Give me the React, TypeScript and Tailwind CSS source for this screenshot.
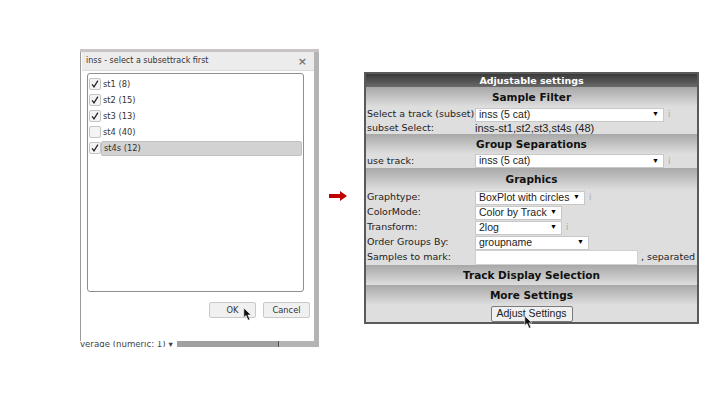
const sans = "font-['Liberation_Sans',sans-serif]";
const dejavu = "font-['DejaVu_Sans',sans-serif]";

const items = [
  { label: "st1 (8)", checked: true },
  { label: "st2 (15)", checked: true },
  { label: "st3 (13)", checked: true },
  { label: "st4 (40)", checked: false },
  { label: "st4s (12)", checked: true, active: true },
];

const Cursor = () => (
  <svg width="10" height="15" viewBox="0 0 13 18" className="absolute">
    <path d="M1 0.5 L1 13 L4 10.3 L6.6 16.5 L9 15.4 L6.4 9.6 L10.5 9.6 Z" fill="#111" stroke="#fff" strokeWidth="0.8" />
  </svg>
);

const Check = () => (
  <svg width="12" height="12" viewBox="0 0 12 12">
    <path d="M2.5 6.5 L4.8 9.5 L9.5 2" fill="none" stroke="#222" strokeWidth="1.5" />
  </svg>
);

const Dialog = () => (
  <div className={`w-[239px] h-[298px] bg-[#b4b4b4] flex flex-col overflow-hidden ${dejavu}`}>
    <div className="h-[3px] bg-[#c9c3c3] shrink-0" />
    <div className="flex h-[289px] shrink-0">
      <div className="w-[2px] bg-white border-l border-[#9a9a9a] shrink-0" />
      <div className="w-[232px] bg-white flex flex-col">
        <div className="h-[19px] bg-[#ececec] border-b border-[#dcdcdc] flex items-center justify-between pl-[4px] pr-[7px] text-[8px] text-[#333] shrink-0">
          <span>inss - select a subsettrack first</span>
          <span className="text-[11px] font-bold text-[#777] leading-none">×</span>
        </div>
        <div className="ml-[5px] mr-[10px] mt-[2px] h-[219px] border border-[#8f8f8f] rounded-[3px] pt-[2px] px-[1px] flex flex-col shrink-0">
          {items.map((it) => (
            <div key={it.label} className="h-[16px] flex items-center">
              <span className="w-[12px] h-[12px] shrink-0 border border-[#c4c4c4] rounded-[2px] bg-[#f4f4f4] flex items-center justify-center">
                {it.checked && <Check />}
              </span>
              <span className={`flex-1 h-[15px] flex items-center pl-[2px] text-[8.3px] text-[#333] rounded-[2px] ${it.active ? "bg-[#d2d2d2] border border-[#c0c0c0]" : ""}`}>
                {it.label}
              </span>
            </div>
          ))}
        </div>
        <div className="flex justify-end gap-[7px] pt-[10px] pr-[4px] text-[8.3px] text-[#333]">
          <button className="relative w-[47px] h-[16px] bg-[#f0f0f0] border border-[#c9c9c9] rounded-[2px] flex items-center justify-center">
            OK
            <span className="absolute left-[33px] top-[4px] w-[10px] h-[15px]"><Cursor /></span>
          </button>
          <button className="w-[47px] h-[16px] bg-[#f0f0f0] border border-[#c9c9c9] rounded-[2px] flex items-center justify-center">Cancel</button>
        </div>
      </div>
    </div>
    <div className="h-[6px] flex shrink-0">
      <div className="w-[97px] bg-white text-[8.6px] leading-[7px] text-[#444] whitespace-nowrap overflow-hidden">verage (numeric: 1) ▾</div>
      <div className="w-[102px] bg-[#a0a0a0] border-r border-[#555]" />
    </div>
  </div>
);

const SectionHead = ({ title, height = "h-[20px]" }: { title: string; height?: string }) => (
  <div className={`${height} pt-[1px] bg-gradient-to-b from-[#a8a8a8] to-[#dedede] flex items-center justify-center text-[10.5px] font-bold text-[#111] ${dejavu}`}>
    {title}
  </div>
);

const Select = ({ value, width }: { value: string; width: string }) => (
  <div className={`h-[14px] bg-white border border-[#c8c8c8] flex items-center justify-between pl-[3px] pr-[4px] text-[10.5px] text-[#222] ${width} ${sans}`}>
    <span className="whitespace-nowrap">{value}</span>
    <span className="text-[7px] text-black">▼</span>
  </div>
);

const Info = () => <span className="ml-[4px] text-[9px] text-[#aaa] leading-none">i</span>;

const Row = ({ label, children }: { label: string; children: React.ReactNode }) => (
  <div className="h-[15px] flex items-center">
    <span className="w-[109px] pl-[1px] shrink-0 whitespace-nowrap">{label}</span>
    {children}
  </div>
);

const Settings = () => (
  <div className={`w-[335px] h-[252px] border-2 border-[#5a5a5a] bg-[#dedede] text-[9.5px] text-[#222] ${dejavu}`}>
    <div className="h-[13px] pt-[1px] bg-gradient-to-b from-[#3a3a3a] to-[#6a6a6a] flex items-center justify-center text-[9.5px] font-bold text-white">
      Adjustable settings
    </div>
    <SectionHead title="Sample Filter" />
    <Row label="Select a track (subset)">
      <Select value="inss (5 cat)" width="w-[189px]" /><Info />
    </Row>
    <div className="h-[12px] flex items-center">
      <span className="w-[109px] pl-[1px]">subset Select:</span>
      <span className={`text-[11px] ${sans}`}>inss-st1,st2,st3,st4s (48)</span>
    </div>
    <SectionHead title="Group Separations" />
    <div className="h-[14px] flex items-center">
      <span className="w-[109px] pl-[1px] shrink-0">use track:</span>
      <Select value="inss (5 cat)" width="w-[189px]" /><Info />
    </div>
    <SectionHead title="Graphics" height="h-[22px]" />
    <Row label="Graphtype:">
      <Select value="BoxPlot with circles" width="w-[110px]" /><Info />
    </Row>
    <Row label="ColorMode:">
      <Select value="Color by Track" width="w-[87px]" />
    </Row>
    <Row label="Transform:">
      <Select value="2log" width="w-[87px]" /><Info />
    </Row>
    <Row label="Order Groups By:">
      <Select value="groupname" width="w-[114px]" />
    </Row>
    <Row label="Samples to mark:">
      <div className="w-[163px] h-[15px] bg-white border border-[#d0d0d0]" />
      <span className="ml-[3px] whitespace-nowrap">, separated</span>
    </Row>
    <SectionHead title="Track Display Selection" />
    <SectionHead title="More Settings" />
    <div className="flex justify-center pt-[1px]">
      <button className={`relative w-[82px] h-[16px] bg-[#f0f0f0] border border-[#7a7a7a] rounded-[2px] text-[10.5px] text-[#222] flex items-center justify-center ${sans}`}>
        Adjust Settings
        <span className="absolute left-[32px] top-[8px] w-[10px] h-[15px]"><Cursor /></span>
      </button>
    </div>
  </div>
);

export default function App() {
  return (
    <div className="w-[720px] h-[416px] bg-white flex items-start pl-[80px] pt-[49px] overflow-hidden">
      <Dialog />
      <svg width="18" height="10" viewBox="0 0 18 10" className="ml-[10px] mt-[142px] shrink-0">
        <path d="M0 3 H11 V0 L18 5 L11 10 V7 H0 Z" fill="#c00000" />
      </svg>
      <div className="ml-[17px] mt-[23px]">
        <Settings />
      </div>
    </div>
  );
}
